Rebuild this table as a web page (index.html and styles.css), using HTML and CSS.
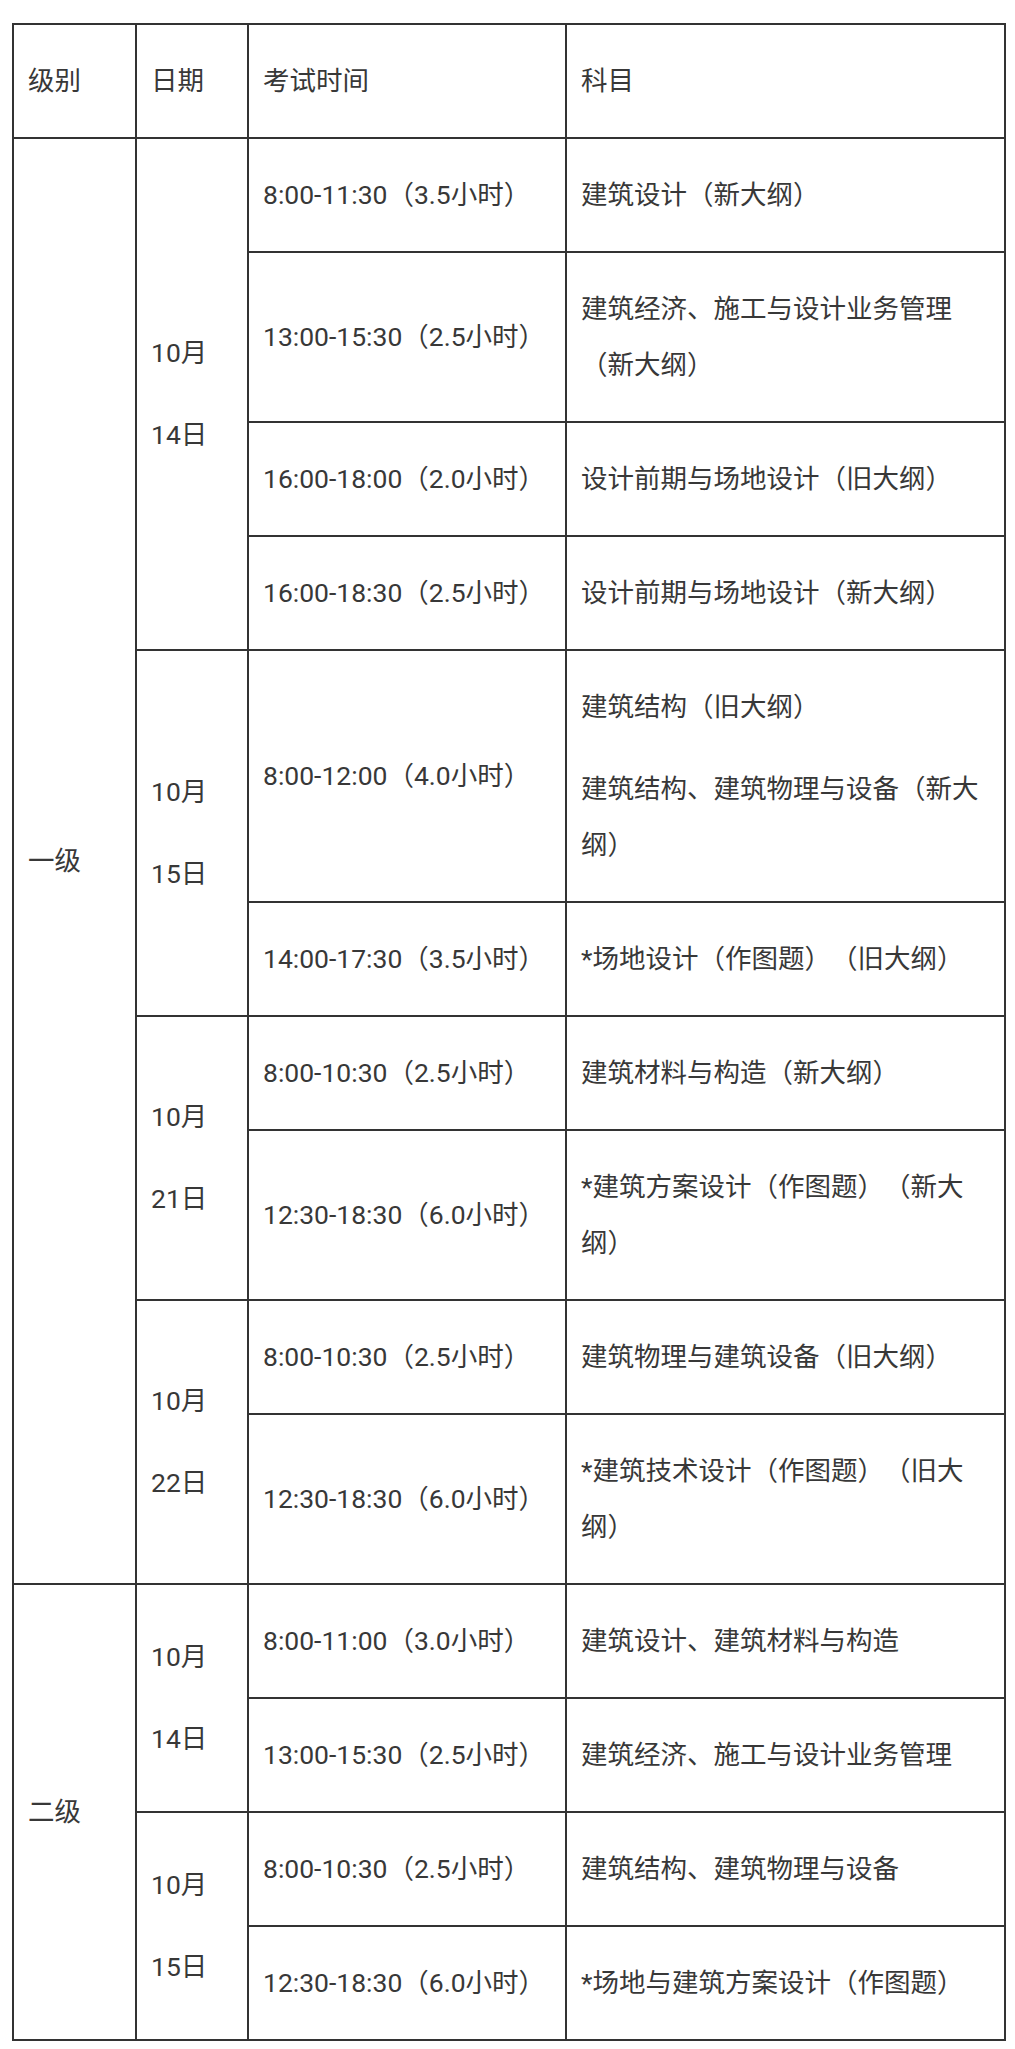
FILE: index.html
```html
<!DOCTYPE html>
<html lang="zh-CN">
<head>
<meta charset="utf-8">
<title>考试时间安排</title>
<link rel="stylesheet" href="styles.css">
</head>
<body>
<table class="schedule">
  <colgroup>
    <col class="c-level">
    <col class="c-date">
    <col class="c-time">
    <col class="c-subject">
  </colgroup>
  <thead>
    <tr><th>级别</th><th>日期</th><th>考试时间</th><th>科目</th></tr>
  </thead>
  <tbody>
    <tr>
      <td rowspan="10">一级</td>
      <td rowspan="4" class="date"><p>10月</p><p>14日</p></td>
      <td>8:00-11:30（3.5小时）</td>
      <td>建筑设计（新大纲）</td>
    </tr>
    <tr><td>13:00-15:30（2.5小时）</td><td>建筑经济、施工与设计业务管理（新大纲）</td></tr>
    <tr><td>16:00-18:00（2.0小时）</td><td>设计前期与场地设计（旧大纲）</td></tr>
    <tr><td>16:00-18:30（2.5小时）</td><td>设计前期与场地设计（新大纲）</td></tr>
    <tr>
      <td rowspan="2" class="date"><p>10月</p><p>15日</p></td>
      <td>8:00-12:00（4.0小时）</td>
      <td><p>建筑结构（旧大纲）</p><p>建筑结构、建筑物理与设备（新大纲）</p></td>
    </tr>
    <tr><td>14:00-17:30（3.5小时）</td><td>*场地设计（作图题）（旧大纲）</td></tr>
    <tr>
      <td rowspan="2" class="date"><p>10月</p><p>21日</p></td>
      <td>8:00-10:30（2.5小时）</td>
      <td>建筑材料与构造（新大纲）</td>
    </tr>
    <tr><td>12:30-18:30（6.0小时）</td><td>*建筑方案设计（作图题）（新大纲）</td></tr>
    <tr>
      <td rowspan="2" class="date"><p>10月</p><p>22日</p></td>
      <td>8:00-10:30（2.5小时）</td>
      <td>建筑物理与建筑设备（旧大纲）</td>
    </tr>
    <tr><td>12:30-18:30（6.0小时）</td><td>*建筑技术设计（作图题）（旧大纲）</td></tr>
    <tr>
      <td rowspan="4">二级</td>
      <td rowspan="2" class="date"><p>10月</p><p>14日</p></td>
      <td>8:00-11:00（3.0小时）</td>
      <td>建筑设计、建筑材料与构造</td>
    </tr>
    <tr><td>13:00-15:30（2.5小时）</td><td>建筑经济、施工与设计业务管理</td></tr>
    <tr>
      <td rowspan="2" class="date"><p>10月</p><p>15日</p></td>
      <td>8:00-10:30（2.5小时）</td>
      <td>建筑结构、建筑物理与设备</td>
    </tr>
    <tr><td>12:30-18:30（6.0小时）</td><td>*场地与建筑方案设计（作图题）</td></tr>
  </tbody>
</table>
</body>
</html>
```

FILE: styles.css
```css
html, body {
  margin: 0;
  background: #ffffff;
}

body {
  padding: 23px 11px 0 12px;
  font-family: Roboto, "Noto Sans CJK SC", "Noto Sans", sans-serif;
  font-size: 26.5px;
  color: #383838;
  text-spacing-trim: space-all;
}

.schedule {
  width: 992px;
  border-collapse: collapse;
  table-layout: fixed;
}

.c-level { width: 123px; }
.c-date { width: 112px; }
.c-time { width: 318px; }
.c-subject { width: 439px; }

.schedule th,
.schedule td {
  border: 2px solid #333333;
  padding: 28px 14px;
  line-height: 56px;
  text-align: left;
  vertical-align: middle;
  font-weight: normal;
}

.schedule p {
  margin: 0;
}

.schedule p + p {
  margin-top: 26px;
}
```
